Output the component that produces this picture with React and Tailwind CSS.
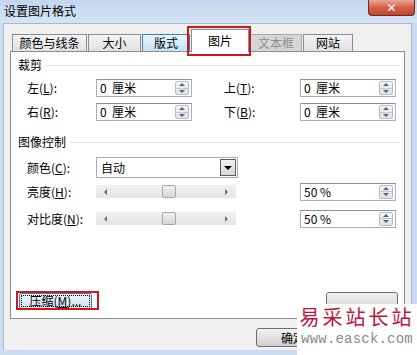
import { useState } from 'react';

const font = { fontFamily: '"Noto Sans CJK SC", "Liberation Sans", sans-serif' };

function Key({ label, k }) {
    return (
        <span>
            {label}(<span className="underline">{k}</span>):
        </span>
    );
}

function Spinner() {
    return (
        <div className="flex flex-col w-[14px] h-[14px] border border-[#b7bcc4] rounded-[2px] bg-gradient-to-b from-[#f4f6f8] to-[#dde2e8]">
            <div className="flex-1 flex items-center justify-center">
                <div className="w-0 h-0 border-l-[3px] border-r-[3px] border-b-[3px] border-l-transparent border-r-transparent border-b-[#4d6185]" />
            </div>
            <div className="h-px bg-[#c3c8cf]" />
            <div className="flex-1 flex items-center justify-center">
                <div className="w-0 h-0 border-l-[3px] border-r-[3px] border-t-[3px] border-l-transparent border-r-transparent border-t-[#4d6185]" />
            </div>
        </div>
    );
}

function SpinInput({ value }) {
    return (
        <div className="w-[96px] h-[18px] flex items-center justify-between border border-[#abadb3] border-t-[#8e9096] bg-white pl-[3px] pr-[2px]">
            <span className="text-[12px] leading-none whitespace-pre">{value}</span>
            <Spinner />
        </div>
    );
}

function Slider() {
    return (
        <div className="relative w-[140px] h-[13px] bg-gradient-to-b from-[#f1f1f1] to-[#e4e4e4] flex items-center justify-between px-[8px]">
            <div className="w-0 h-0 border-t-[3px] border-b-[3px] border-r-[3px] border-t-transparent border-b-transparent border-r-[#707070]" />
            <div className="w-0 h-0 border-t-[3px] border-b-[3px] border-l-[3px] border-t-transparent border-b-transparent border-l-[#707070]" />
            <div className="absolute left-[66px] top-0 w-[14px] h-[13px] border border-[#a7a7a7] rounded-[2px] bg-gradient-to-b from-[#f0f0f0] to-[#d6d6d6]" />
        </div>
    );
}

function Heading({ text }) {
    return (
        <div className="flex items-center h-[16px] pl-[7px] pr-[5px]">
            <span className="text-[12px] leading-none">{text}</span>
            <div className="flex-1 ml-[4px] h-px bg-[#dce2e7]" />
        </div>
    );
}

const tabs = [
    { name: '颜色与线条', w: 'w-[75px]', kind: 'normal' },
    { name: '大小', w: 'w-[53px]', kind: 'normal' },
    { name: '版式', w: 'w-[48px]', kind: 'hover' },
    { name: '图片', w: 'w-[58px]', kind: 'active' },
    { name: '文本框', w: 'w-[52px]', kind: 'disabled' },
    { name: '网站', w: 'w-[50px]', kind: 'normal' },
];

export default function App() {
    const [active] = useState('图片');

    return (
        <div className="relative w-[417px] h-[355px] bg-[#cbdcf0] flex flex-col overflow-hidden text-black" style={font}>
            {/* title bar */}
            <div className="h-[23px] flex items-start justify-between bg-gradient-to-b from-[#c3d6ee] to-[#d5e4f5]">
                <span className="text-[12px] leading-none mt-[5px] ml-[4px]">设置图片格式</span>
                <div className="mr-[2px] w-[47px] h-[16px] rounded-b-[4px] border border-t-0 border-[#6d2a1e] bg-gradient-to-b from-[#e8a899] via-[#d2604a] to-[#c3432b] flex items-center justify-center">
                    <span className="text-white text-[12px] font-bold leading-none" style={{ fontFamily: '"DejaVu Sans", sans-serif' }}>✕</span>
                </div>
            </div>

            {/* client area */}
            <div className="ml-[3px] w-[409px] h-[327px] bg-[#f0f0f0] border-t border-x border-[#a9b8c9] flex flex-col">
                <div className="h-[27px] flex items-end pl-[8px] gap-[1px]">
                    {tabs.map((t) => {
                        if (t.name === active) {
                            return (
                                <div key={t.name} className="relative z-10 -mb-px">
                                    <div className={`${t.w} h-[23px] bg-white border border-b-0 border-[#898c95] flex items-center justify-center text-[12px]`}>
                                        {t.name}
                                    </div>
                                    <div className="absolute -left-[4px] -right-[2px] -top-[3px] -bottom-[4px] border-2 border-[#d0151c]" />
                                </div>
                            );
                        }
                        const cls =
                            t.kind === 'hover'
                                ? 'bg-gradient-to-b from-[#eaf6fd] to-[#bfe4f8] border-[#3c7fb1]'
                                : t.kind === 'disabled'
                                ? 'bg-[#d6d6d6] border-[#a9a9a9] text-[#8f8f8f]'
                                : 'bg-gradient-to-b from-[#f4f4f4] to-[#e1e1e1] border-[#898c95]';
                        return (
                            <div key={t.name} className={`${t.w} h-[17px] border border-b-0 ${cls} flex items-center justify-center text-[12px]`}>
                                {t.name}
                            </div>
                        );
                    })}
                </div>

                {/* panel */}
                <div className="ml-[6px] w-[395px] h-[268px] bg-white border border-[#898c95] flex flex-col pt-[5px] pb-[9px]">
                    <Heading text="裁剪" />

                    <div className="mt-[6px] flex items-center h-[18px] pl-[16px] text-[12px]">
                        <div className="w-[69px]"><Key label="左" k="L" /></div>
                        <SpinInput value="0  厘米" />
                        <div className="w-[76px] ml-[32px]"><Key label="上" k="T" /></div>
                        <SpinInput value="0  厘米" />
                    </div>
                    <div className="mt-[6px] flex items-center h-[18px] pl-[16px] text-[12px]">
                        <div className="w-[69px]"><Key label="右" k="R" /></div>
                        <SpinInput value="0  厘米" />
                        <div className="w-[76px] ml-[32px]"><Key label="下" k="B" /></div>
                        <SpinInput value="0  厘米" />
                    </div>

                    <div className="mt-[13px]">
                        <Heading text="图像控制" />
                    </div>

                    <div className="mt-[7px] flex items-center h-[21px] pl-[16px] text-[12px]">
                        <div className="w-[69px]"><Key label="颜色" k="C" /></div>
                        <div className="w-[142px] h-[21px] border border-[#abadb3] bg-white flex items-center justify-between pl-[4px] pr-[1px]">
                            <span className="leading-none">自动</span>
                            <div className="w-[16px] h-[17px] border border-[#5a5a5a] bg-gradient-to-b from-[#f2f2f2] to-[#d8d8d8] flex items-center justify-center">
                                <div className="w-0 h-0 border-l-[4px] border-r-[4px] border-t-[4px] border-l-transparent border-r-transparent border-t-black" />
                            </div>
                        </div>
                    </div>

                    <div className="mt-[5px] flex items-center h-[17px] pl-[16px] text-[12px]">
                        <div className="w-[69px]"><Key label="亮度" k="H" /></div>
                        <Slider />
                        <div className="ml-[64px]"><SpinInput value="50 %" /></div>
                    </div>
                    <div className="mt-[10px] flex items-center h-[17px] pl-[16px] text-[12px]">
                        <div className="w-[69px]"><Key label="对比度" k="N" /></div>
                        <Slider />
                        <div className="ml-[64px]"><SpinInput value="50 %" /></div>
                    </div>

                    <div className="mt-auto flex items-center h-[16px] pl-[8px] pr-[6px] justify-between text-[12px]">
                        <div className="relative">
                            <div className="w-[73px] h-[16px] border border-[#3c7fb1] rounded-[2px] bg-gradient-to-b from-[#eef6fb] to-[#cfe3f0] p-[1px]">
                                <div className="h-full border border-dotted border-black flex items-center justify-center leading-none">
                                    压缩(<span className="underline">M</span>)...
                                </div>
                            </div>
                            <div className="absolute -left-[3px] -top-[2px] w-[83px] h-[19px] border-2 border-[#d0151c]" />
                        </div>
                        {/* reset button, mostly hidden under the watermark */}
                        <div className="w-[72px] h-[18px] border border-[#707070] rounded-[3px] bg-gradient-to-b from-[#f2f2f2] to-[#d5d5d5]" />
                    </div>
                </div>

                <div className="mt-[9px] flex pl-[252px] gap-[6px] text-[12px]">
                    <div className="w-[75px] h-[19px] border border-[#707070] rounded-[3px] bg-gradient-to-b from-[#f2f2f2] to-[#d0d0d0] flex items-center pl-[24px] leading-none">
                        确定
                    </div>
                    <div className="w-[75px] h-[19px] border border-[#707070] rounded-[3px] bg-gradient-to-b from-[#f2f2f2] to-[#d0d0d0]" />
                </div>
            </div>

            {/* watermark */}
            <div className="absolute left-[297px] top-[304px] w-[120px] h-[51px] bg-white flex flex-col items-center pt-[1px]">
                <span className="text-[20px] leading-[24px] tracking-[3px] text-[#c0143c]">易采站长站</span>
                <span className="text-[14px] leading-[20px] text-[#8a8a8a] tracking-[0.2px]" style={{ fontFamily: '"Liberation Mono", monospace' }}>www.easck.com</span>
            </div>
        </div>
    );
}
